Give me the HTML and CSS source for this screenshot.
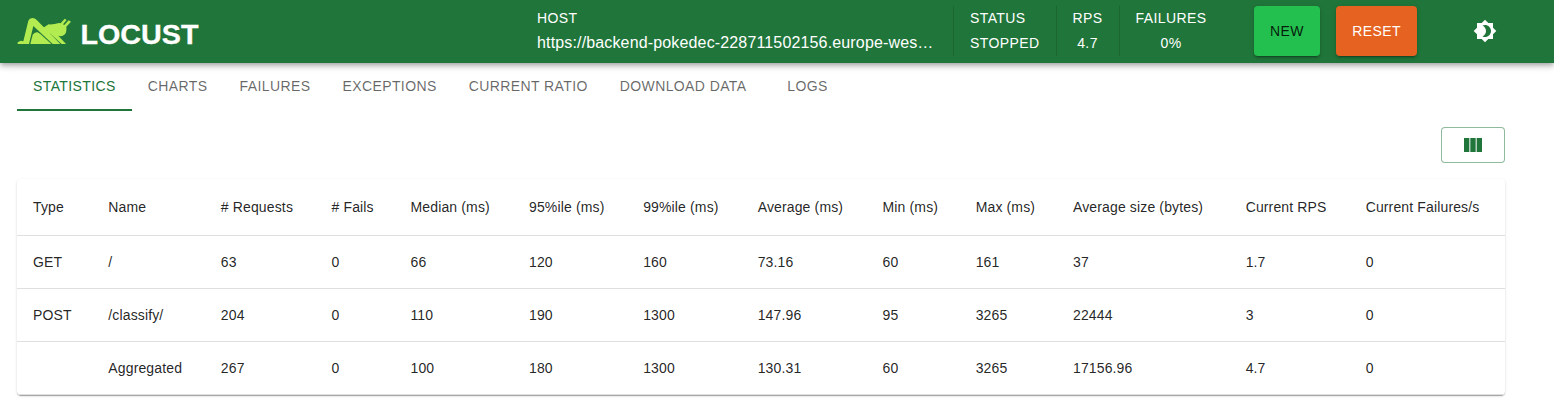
FILE: index.html
```
<!DOCTYPE html>
<html lang="en">
<head>
<meta charset="utf-8">
<title>Locust</title>
<link rel="stylesheet" href="styles.css">
</head>
<body>
<header class="navbar">
  <div class="brand">
    <svg class="brand-mark" viewBox="48 51 165 84">
      <path fill="#b3ec50" d="M50 132V127L59 122L67 124L82 62Q85 54 94 54Q102 54 108 61L178 132H155L97 78L84 132Z"/>
      <path fill="#b3ec50" d="M88 132L95 104Q102 96 110 97L118 102L151 132Z"/>
      <path fill="#b3ec50" d="M120 88L143 73Q158 74 174 69L179 70L191 56L197 60L186 73L190 75L203 61L210 65L196 80Q198 97 190 104Q183 111 172 107L195 132H182L148 101L134 99Z"/>
    </svg>
    <svg class="brand-name" viewBox="0 0 124 28"><text x="0.500" y="23" textLength="118" lengthAdjust="spacingAndGlyphs">LOCUST</text></svg>
  </div>
  <div class="stats">
    <div class="stat host"><span>HOST</span><span class="url">https://backend-pokedec-228711502156.europe-wes…</span></div>
    <div class="stat status"><span>STATUS</span><span>STOPPED</span></div>
    <div class="stat rps"><span>RPS</span><span>4.7</span></div>
    <div class="stat fails"><span>FAILURES</span><span>0%</span></div>
  </div>
  <div class="actions">
    <button class="btn btn-new">NEW</button>
    <button class="btn btn-reset">RESET</button>
    <svg class="theme" viewBox="0 0 24 24" fill="#fff"><path d="M20 8.690V4h-4.690L12 .69 8.690 4H4v4.690L.69 12 4 15.310V20h4.690L12 23.310 15.310 20H20v-4.690L23.310 12 20 8.690zM12 18c-.89 0-1.740-.2-2.500-.55C11.560 16.500 13 14.420 13 12s-1.440-4.500-3.500-5.450C10.260 6.200 11.110 6 12 6c3.310 0 6 2.690 6 6s-2.690 6-6 6z"/></svg>
  </div>
</header>
<nav class="tabs">
  <a class="tab active">STATISTICS</a><a class="tab">CHARTS</a><a class="tab">FAILURES</a><a class="tab">EXCEPTIONS</a><a class="tab">CURRENT RATIO</a><a class="tab">DOWNLOAD DATA</a><a class="tab">LOGS</a>
</nav>
<main class="content">
  <button class="columns"><svg viewBox="0 0 24 24" fill="#20753a"><path d="M14.67 5v14H9.33V5h5.34zm1 14H21V5h-5.33v14zm-7.34 0V5H3v14h5.33z"/></svg></button>
  <div class="paper">
    <table>
      <colgroup><col class="c1"><col class="c2"><col class="c3"><col class="c4"><col class="c5"><col class="c6"><col class="c7"><col class="c8"><col class="c9"><col class="c10"><col class="c11"><col class="c12"><col class="c13"></colgroup>
      <thead><tr><th>Type</th><th>Name</th><th># Requests</th><th># Fails</th><th>Median (ms)</th><th>95%ile (ms)</th><th>99%ile (ms)</th><th>Average (ms)</th><th>Min (ms)</th><th>Max (ms)</th><th>Average size (bytes)</th><th>Current RPS</th><th>Current Failures/s</th></tr></thead>
      <tbody>
        <tr><td>GET</td><td>/</td><td>63</td><td>0</td><td>66</td><td>120</td><td>160</td><td>73.16</td><td>60</td><td>161</td><td>37</td><td>1.7</td><td>0</td></tr>
        <tr><td>POST</td><td>/classify/</td><td>204</td><td>0</td><td>110</td><td>190</td><td>1300</td><td>147.96</td><td>95</td><td>3265</td><td>22444</td><td>3</td><td>0</td></tr>
        <tr><td></td><td>Aggregated</td><td>267</td><td>0</td><td>100</td><td>180</td><td>1300</td><td>130.31</td><td>60</td><td>3265</td><td>17156.96</td><td>4.7</td><td>0</td></tr>
      </tbody>
    </table>
  </div>
</main>
</body>
</html>
```
FILE: styles.css
```
* { box-sizing: border-box; }
body { margin: 0; height: 416px; overflow: hidden; background: #fff; font-family: "Liberation Sans", Arial, sans-serif; color: rgba(0,0,0,.87); }
button { font-family: inherit; }

.navbar { display: flex; height: 63px; padding: 6px 57px 7px 17px; background: #20753a; color: #fff;
  box-shadow: 0 2px 4px -1px rgba(0,0,0,.2), 0 4px 5px rgba(0,0,0,.14), 0 1px 10px rgba(0,0,0,.12); }
.brand { display: flex; flex: none; width: 520px; padding-top: 11px; gap: 8px; }
.brand-mark { width: 55px; height: 28px; }
.brand-name { width: 124px; height: 28px; margin-top: 4px; }
.brand-name text { font-family: "Liberation Sans", Arial, sans-serif; font-size: 27px; font-weight: 700; fill: #fff; stroke: #fff; stroke-width: .3px; }

.stats { display: flex; flex: none; height: 50px; }
.stat { display: flex; flex: none; flex-direction: column; align-items: center; font-size: 14px; line-height: 25px; letter-spacing: .4px; white-space: nowrap; border-right: 1px solid rgba(0,0,0,.12); }
.host { width: 417px; align-items: flex-start; padding-right: 16px; }
.url { font-size: 16px; line-height: 23px; letter-spacing: .15px; }
.status { width: 103px; padding-left: 16px; align-items: flex-start; }
.rps { width: 63px; padding-right: 1px; }
.fails { width: 102px; border-right: 0; }

.actions { display: flex; flex: none; align-items: center; margin-left: 32px; }
.btn { height: 50px; padding: 0; border: 0; border-radius: 4px; font-size: 14px; letter-spacing: .4px;
  box-shadow: 0 3px 1px -2px rgba(0,0,0,.2), 0 2px 2px rgba(0,0,0,.14), 0 1px 5px rgba(0,0,0,.12); }
.btn-new { width: 66px; background: #24c04f; color: rgba(0,0,0,.87); }
.btn-reset { width: 81px; margin-left: 16px; background: #e66220; color: #fff; }
.theme { width: 24px; height: 24px; margin-left: 56px; }

.tabs { display: flex; height: 48px; padding-left: 17px; }
.tab { display: flex; justify-content: center; padding: 0 16px; line-height: 46px; font-size: 14px; letter-spacing: .4px; color: rgba(0,0,0,.6); white-space: nowrap; min-width: 90px; }
.active { color: #20753a; border-bottom: 2px solid #20753a; }

.content { display: flex; flex-direction: column; width: 1505px; padding: 16px 0 0 17px; }
.columns { display: flex; align-items: center; justify-content: center; align-self: flex-end; width: 64px; height: 36px; padding: 0; background: #fff; border: 1px solid rgba(32,117,58,.5); border-radius: 4px; }
.columns svg { width: 24px; height: 24px; }
.paper { width: 1488px; margin-top: 16px; border-radius: 4px; box-shadow: 0 2px 1px -1px rgba(0,0,0,.2), 0 1px 1px rgba(0,0,0,.14), 0 1px 3px rgba(0,0,0,.12); }
table { width: 1488px; table-layout: fixed; border-collapse: separate; border-spacing: 0; font-size: 14px; letter-spacing: .14px; }
th, td { height: 53px; padding: 0 0 0 16px; text-align: left; font-weight: 400; white-space: nowrap; border-bottom: 1px solid #dfdfdf; }
th { height: 57px; }
.c1 { width: 75.3px; } .c2 { width: 112.5px; } .c3 { width: 110.7px; } .c4 { width: 79px; }
.c5 { width: 118.5px; } .c6 { width: 114.2px; } .c7 { width: 114.5px; } .c8 { width: 124.9px; }
.c9 { width: 93.1px; } .c10 { width: 97.3px; } .c11 { width: 172.7px; } .c12 { width: 120px; } .c13 { width: 155.3px; }
```
